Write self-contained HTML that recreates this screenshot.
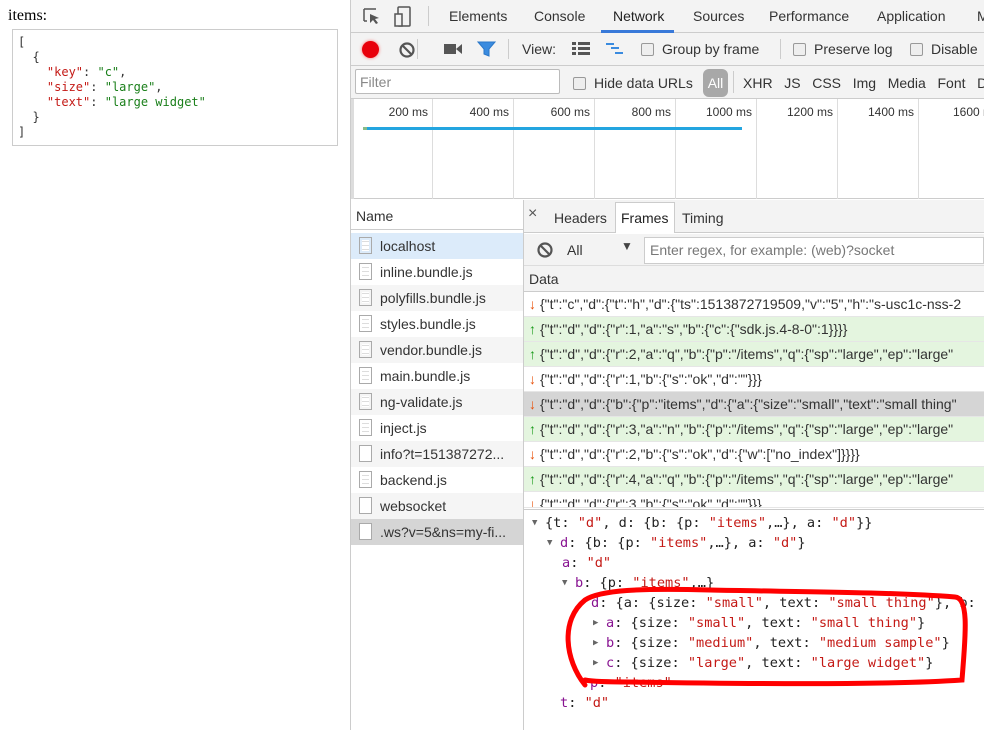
<!DOCTYPE html>
<html><head><style>
*{box-sizing:border-box;margin:0;padding:0}
body{width:984px;height:730px;overflow:hidden;background:#fff;position:relative;font-family:"Liberation Sans",sans-serif;font-size:14px;color:#333}
.a{position:absolute;white-space:nowrap}
.mono{font-family:"DejaVu Sans Mono","Liberation Mono",monospace;font-size:12px}
.dt{font-size:14px;color:#333}
.row{position:absolute;left:351px;width:172px;height:26px;font-size:14px;line-height:26px;padding-left:29px}
.row i{position:absolute;left:8px;top:4px;width:13px;height:17px;border:1px solid #aaa;background:repeating-linear-gradient(#fff 0 3px,#ddd 3px 4px);background-clip:content-box;padding:2px}
.d{position:absolute;left:524px;width:460px;height:25px;font-size:14px;line-height:25px;padding-left:16px;border-bottom:1px solid #e6e6e6;overflow:hidden}
.d b{position:absolute;left:5px;font-weight:bold}
.k{color:#881391}.s{color:#c41a16}
.cb{display:inline-block;width:13px;height:13px;border:1px solid #999;border-radius:2px;background:#eee;vertical-align:-2px;margin-right:8px}
.t{position:absolute;height:20px;white-space:nowrap}
.ar{position:absolute;color:#666;font-size:9px;line-height:20px}
</style></head><body>
<div class="a" style="left:8px;top:7px;font-family:'Liberation Serif',serif;font-size:16px;color:#000">items:</div>
<div class="a" style="left:12px;top:29px;width:326px;height:117px;border:1px solid #ccc"></div>
<pre class="a mono" style="left:18px;top:35px;line-height:15px;color:#333;white-space:pre">[
  {
    <span class="s">"key"</span>: <span style="color:#1a7f1a">"c"</span>,
    <span class="s">"size"</span>: <span style="color:#1a7f1a">"large"</span>,
    <span class="s">"text"</span>: <span style="color:#1a7f1a">"large widget"</span>
  }
]</pre>

<div class="a" style="left:350px;top:0;width:634px;height:730px;background:#fff;border-left:1px solid #ccc"></div>
<div class="a" style="left:351px;top:0;width:633px;height:33px;background:#f3f3f3;border-bottom:1px solid #ccc"></div>
<svg class="a" style="left:362px;top:6px" width="60" height="22" viewBox="0 0 60 22"><path d="M2 3h12M2 3v12M2 15h3" stroke="#555" stroke-width="1.5" fill="none"/><path d="M8 8l9 4-4 1 3 4-2 1-3-4-3 3z" fill="#555"/><rect x="36" y="1" width="12" height="19" rx="1" stroke="#555" stroke-width="1.5" fill="none"/><rect x="33" y="8" width="7" height="12" stroke="#555" stroke-width="1.5" fill="#f3f3f3"/></svg>
<div class="a" style="left:428px;top:6px;width:1px;height:20px;background:#ccc"></div>
<div class="a dt" style="left:449px;top:8px">Elements</div>
<div class="a dt" style="left:534px;top:8px">Console</div>
<div class="a dt" style="left:613px;top:8px;color:#222">Network</div>
<div class="a" style="left:601px;top:30px;width:73px;height:3px;background:#3879d9"></div>
<div class="a dt" style="left:693px;top:8px">Sources</div>
<div class="a dt" style="left:769px;top:8px">Performance</div>
<div class="a dt" style="left:877px;top:8px">Application</div>
<div class="a dt" style="left:977px;top:8px">M</div>

<div class="a" style="left:351px;top:33px;width:633px;height:33px;background:#f3f3f3;border-bottom:1px solid #ccc"></div>
<div class="a" style="left:362px;top:41px;width:17px;height:17px;border-radius:50%;background:#e8000b;box-shadow:0 0 3px #f66"></div>
<svg class="a" style="left:398px;top:41px" width="18" height="18"><circle cx="9" cy="9" r="6.5" stroke="#555" stroke-width="2.2" fill="none"/><path d="M4.5 4.5l9 9" stroke="#555" stroke-width="2.2"/></svg>
<div class="a" style="top:39px;width:1px;height:20px;background:#ccc;left:417px"></div>
<svg class="a" style="left:444px;top:42px" width="20" height="14"><rect x="0" y="2" width="12" height="10" fill="#555"/><path d="M12 7l6-5v10z" fill="#555"/></svg>
<svg class="a" style="left:477px;top:40px" width="20" height="18"><path d="M1 2h17l-6 7v7l-5-2v-5z" fill="#3a8bdf" stroke="#2a77c8"/></svg>
<div class="a" style="top:39px;width:1px;height:20px;background:#ccc;left:508px"></div>
<div class="a dt" style="left:522px;top:41px">View:</div>
<svg class="a" style="left:572px;top:42px" width="18" height="14"><g fill="#555"><rect x="0" y="0" width="4" height="3"/><rect x="6" y="0" width="12" height="3"/><rect x="0" y="5" width="4" height="3"/><rect x="6" y="5" width="12" height="3"/><rect x="0" y="10" width="4" height="3"/><rect x="6" y="10" width="12" height="3"/></g></svg>
<svg class="a" style="left:606px;top:42px" width="18" height="14"><g fill="#3a8bdf"><rect x="0" y="1" width="8" height="2"/><rect x="5" y="5" width="8" height="2"/><rect x="9" y="10" width="8" height="2"/></g></svg>
<div class="a dt" style="left:641px;top:41px"><span class="cb"></span>Group by frame</div>
<div class="a" style="left:780px;top:39px;width:1px;height:20px;background:#ccc"></div>
<div class="a dt" style="left:793px;top:41px"><span class="cb"></span>Preserve log</div>
<div class="a dt" style="left:910px;top:41px"><span class="cb"></span>Disable</div>

<div class="a" style="left:351px;top:66px;width:633px;height:33px;background:#f3f3f3;border-bottom:1px solid #ccc"></div>
<div class="a" style="left:355px;top:69px;width:205px;height:25px;background:#fff;border:1px solid #bbb;border-radius:2px;padding:5px 4px;color:#888;font-size:14px;line-height:14px">Filter</div>
<div class="a dt" style="left:573px;top:75px"><span class="cb"></span>Hide data URLs</div>
<div class="a" style="left:703px;top:69px;width:25px;height:28px;background:#a8a8a8;border-radius:6px;color:#fff;font-size:14px;line-height:28px;text-align:center">All</div>
<div class="a" style="left:733px;top:71px;width:1px;height:22px;background:#ccc"></div>
<div class="a dt" style="left:743px;top:75px">XHR&nbsp;&nbsp; JS&nbsp;&nbsp; CSS&nbsp;&nbsp; Img&nbsp;&nbsp; Media&nbsp;&nbsp; Font&nbsp;&nbsp; D</div>

<div class="a" style="left:351px;top:99px;width:633px;height:100px;background:#fff;border-bottom:1px solid #ccc"></div>
<div class="a" style="left:351px;top:99px;width:3px;height:100px;background:#ddd"></div>
<div id="tl"></div>
<div class="a" style="left:365px;top:127px;width:377px;height:3px;background:#23a5e0"></div>
<div class="a" style="left:363px;top:127px;width:4px;height:3px;background:#8b8"></div>

<div class="a" style="left:351px;top:200px;width:172px;height:30px;border-bottom:1px solid #ccc;font-size:14px;padding:8px 5px">Name</div>
<div class="a" style="left:523px;top:200px;width:1px;height:530px;background:#ccc"></div>
<div id="rows"></div>

<div class="a" style="left:524px;top:200px;width:460px;height:33px;border-bottom:1px solid #ccc;background:#f3f3f3"></div>
<div class="a" style="left:528px;top:205px;font-size:16px;color:#555">×</div>
<div class="a dt" style="left:554px;top:210px">Headers</div>
<div class="a" style="left:615px;top:202px;width:60px;height:31px;background:#fff;border:1px solid #ccc;border-bottom:none"></div>
<div class="a dt" style="left:621px;top:210px;color:#222">Frames</div>
<div class="a dt" style="left:682px;top:210px">Timing</div>
<div class="a" style="left:524px;top:234px;width:460px;height:32px;background:#f3f3f3;border-bottom:1px solid #ddd"></div>
<svg class="a" style="left:536px;top:241px" width="18" height="18"><circle cx="9" cy="9" r="6.5" stroke="#555" stroke-width="2.2" fill="none"/><path d="M4.5 4.5l9 9" stroke="#555" stroke-width="2.2"/></svg>
<div class="a dt" style="left:567px;top:242px">All</div>
<div class="a" style="left:621px;top:239px;font-size:12px;color:#444">▼</div>
<div class="a" style="left:644px;top:237px;width:340px;height:27px;background:#fff;border:1px solid #ccc;padding:5px;color:#777;font-size:14px;line-height:15px">Enter regex, for example: (web)?socket</div>
<div class="a" style="left:524px;top:266px;width:460px;height:26px;background:#f3f3f3;border-bottom:1px solid #ccc;padding:5px 5px;font-size:14px">Data</div>
<div id="data"></div>

<div class="a" style="left:524px;top:509px;width:460px;height:1px;background:#ccc"></div>
<div class="a mono" style="left:0;top:513px;line-height:20px;font-size:13.6px;color:#222">
<span class="ar" style="left:532px;top:0">▼</span><div class="t" style="left:545px;top:0">{t: <span class="s">"d"</span>, d: {b: {p: <span class="s">"items"</span>,…}, a: <span class="s">"d"</span>}}</div>
<span class="ar" style="left:547px;top:20px">▼</span><div class="t" style="left:560px;top:20px"><span class="k">d</span>: {b: {p: <span class="s">"items"</span>,…}, a: <span class="s">"d"</span>}</div>
<div class="t" style="left:562px;top:40px"><span class="k">a</span>: <span class="s">"d"</span></div>
<span class="ar" style="left:562px;top:60px">▼</span><div class="t" style="left:575px;top:60px"><span class="k">b</span>: {p: <span class="s">"items"</span>,…}</div>
<div class="t" style="left:591px;top:80px"><span class="k">d</span>: {a: {size: <span class="s">"small"</span>, text: <span class="s">"small thing"</span>}, b:</div>
<span class="ar" style="left:593px;top:100px">▶</span><div class="t" style="left:606px;top:100px"><span class="k">a</span>: {size: <span class="s">"small"</span>, text: <span class="s">"small thing"</span>}</div>
<span class="ar" style="left:593px;top:120px">▶</span><div class="t" style="left:606px;top:120px"><span class="k">b</span>: {size: <span class="s">"medium"</span>, text: <span class="s">"medium sample"</span>}</div>
<span class="ar" style="left:593px;top:140px">▶</span><div class="t" style="left:606px;top:140px"><span class="k">c</span>: {size: <span class="s">"large"</span>, text: <span class="s">"large widget"</span>}</div>
<div class="t" style="left:590px;top:160px"><span class="k">p</span>: <span class="s">"items"</span></div>
<div class="t" style="left:560px;top:180px"><span class="k">t</span>: <span class="s">"d"</span></div>
</div>
<svg class="a" style="left:560px;top:580px" width="424" height="110"><path d="M25 105C5 80 0 40 25 20 40 10 80 8 150 10 250 12 330 12 395 17 410 18 405 60 402 100 330 105 200 104 70 102 40 102 30 101 25 100" stroke="#f00" stroke-width="5" fill="none" stroke-linecap="round"/></svg>

<script>
var tl=document.getElementById('tl'),h='';
var xs=[432,513,594,675,756,837,918],lb=['200 ms','400 ms','600 ms','800 ms','1000 ms','1200 ms','1400 ms'];
xs.forEach(function(x,i){h+='<div class="a" style="left:'+x+'px;top:99px;width:1px;height:100px;background:#ddd"></div><div class="a" style="left:'+(x-80)+'px;width:76px;text-align:right;top:105px;font-size:12px;color:#333">'+lb[i]+'</div>';});
h+='<div class="a" style="left:953px;top:105px;font-size:12px;color:#333">1600 ms</div>';
tl.innerHTML=h;
var n=['localhost','inline.bundle.js','polyfills.bundle.js','styles.bundle.js','vendor.bundle.js','main.bundle.js','ng-validate.js','inject.js','info?t=151387272...','backend.js','websocket','.ws?v=5&amp;ns=my-fi...'];
h='';n.forEach(function(t,i){var bg=i==0?'#dcebfa':i==11?'#d5d5d5':(i%2==0?'#f5f5f5':'#fff');var ic=(i==8||i>=10)?'background:#fff':'';h+='<div class="row" style="top:'+(233+26*i)+'px;background:'+bg+'"><i style="'+ic+'"></i>'+t+'</div>';});
document.getElementById('rows').innerHTML=h;
var d=[['d','{"t":"c","d":{"t":"h","d":{"ts":1513872719509,"v":"5","h":"s-usc1c-nss-2'],['u','{"t":"d","d":{"r":1,"a":"s","b":{"c":{"sdk.js.4-8-0":1}}}}'],['u','{"t":"d","d":{"r":2,"a":"q","b":{"p":"/items","q":{"sp":"large","ep":"large"'],['d','{"t":"d","d":{"r":1,"b":{"s":"ok","d":""}}}'],['s','{"t":"d","d":{"b":{"p":"items","d":{"a":{"size":"small","text":"small thing"'],['u','{"t":"d","d":{"r":3,"a":"n","b":{"p":"/items","q":{"sp":"large","ep":"large"'],['d','{"t":"d","d":{"r":2,"b":{"s":"ok","d":{"w":["no_index"]}}}}'],['u','{"t":"d","d":{"r":4,"a":"q","b":{"p":"/items","q":{"sp":"large","ep":"large"'],['d','{"t":"d","d":{"r":3,"b":{"s":"ok","d":""}}}']];
h='';d.forEach(function(r,i){var bg=r[0]=='u'?'#e4f5df':r[0]=='s'?'#d5d5d5':'#fff';var ar=r[0]=='u'?'<b style="color:#1a9a1a">↑</b>':'<b style="color:#e8500a">↓</b>';var top=292+25*i;var hh=i==8?16:25;h+='<div class="d" style="top:'+top+'px;height:'+hh+'px;background:'+bg+'">'+ar+r[1].replace(/</g,'&lt;')+'</div>';});
document.getElementById('data').innerHTML=h;
</script>
</body></html>
